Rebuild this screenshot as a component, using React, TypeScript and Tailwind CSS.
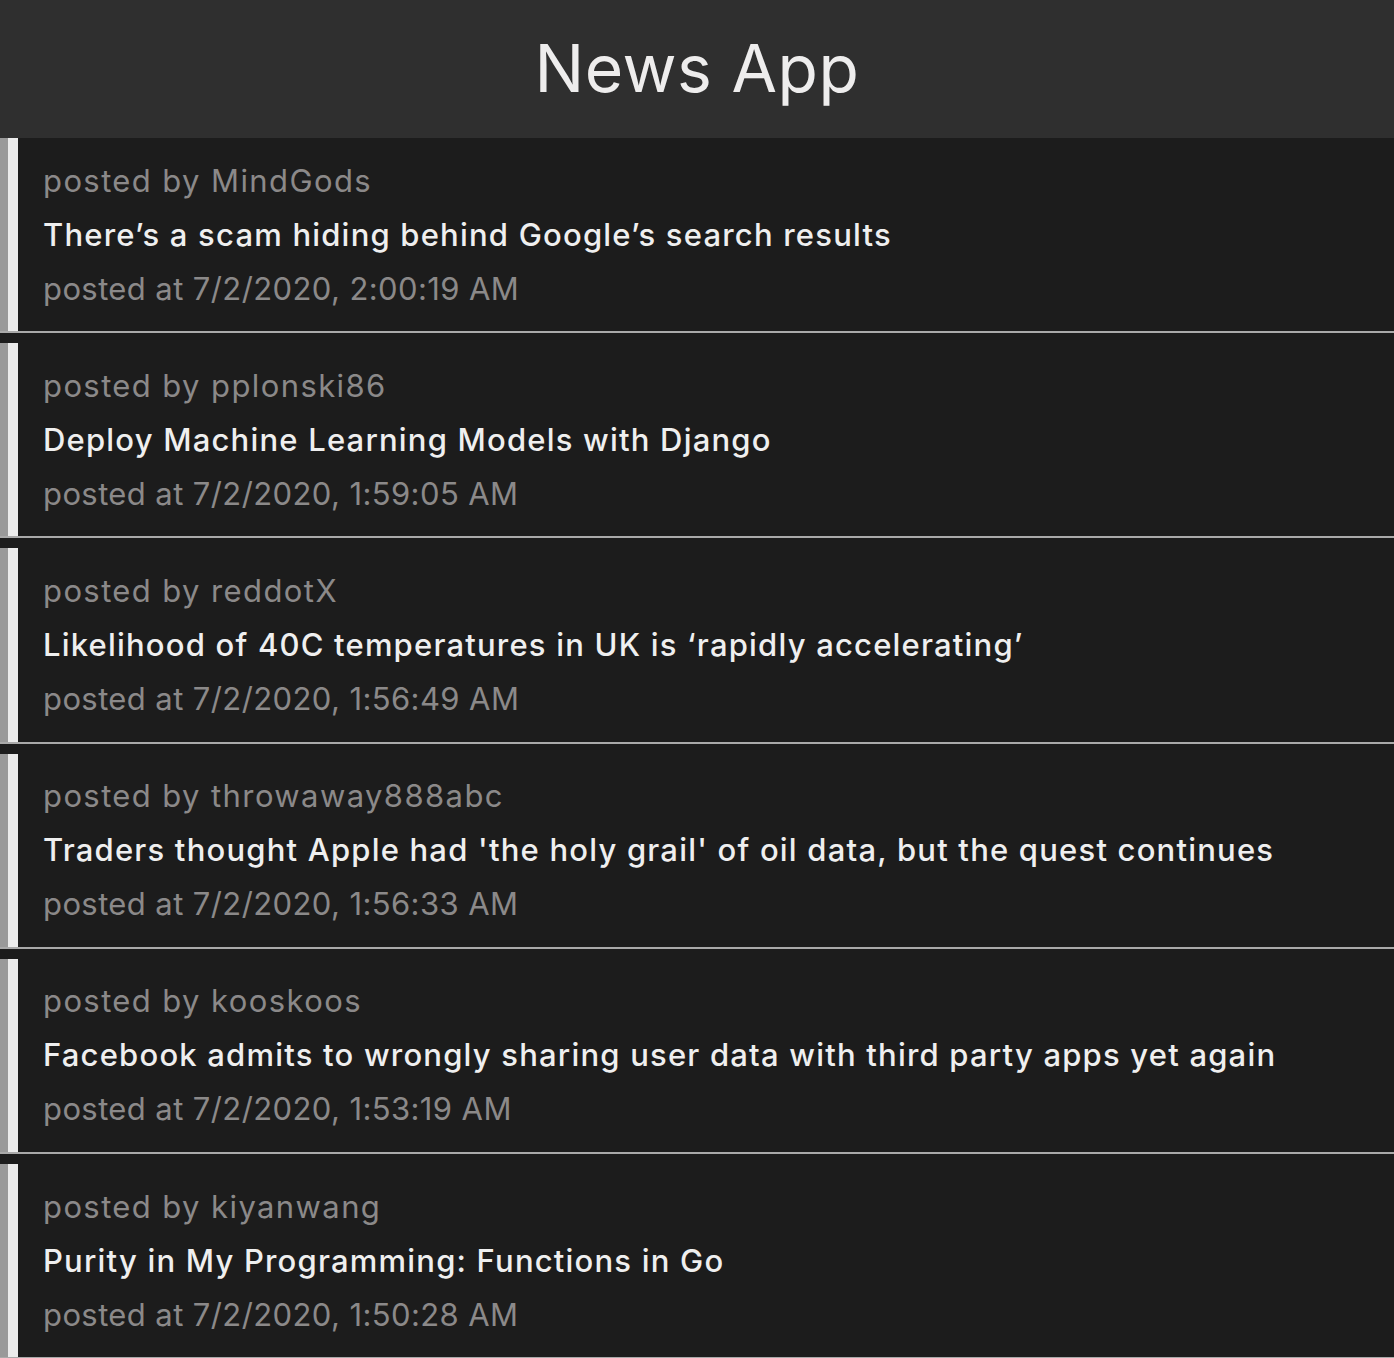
import React from 'react';

const posts = [
  { by: 'MindGods', title: 'There’s a scam hiding behind Google’s search results', at: '7/2/2020, 2:00:19 AM' },
  { by: 'pplonski86', title: 'Deploy Machine Learning Models with Django', at: '7/2/2020, 1:59:05 AM' },
  { by: 'reddotX', title: 'Likelihood of 40C temperatures in UK is ‘rapidly accelerating’', at: '7/2/2020, 1:56:49 AM' },
  { by: 'throwaway888abc', title: "Traders thought Apple had 'the holy grail' of oil data, but the quest continues", at: '7/2/2020, 1:56:33 AM' },
  { by: 'kooskoos', title: 'Facebook admits to wrongly sharing user data with third party apps yet again', at: '7/2/2020, 1:53:19 AM' },
  { by: 'kiyanwang', title: 'Purity in My Programming: Functions in Go', at: '7/2/2020, 1:50:28 AM' },
];

const App = () => {
  return (
    <div className="min-h-screen bg-[#1c1c1c] font-['Inter',sans-serif]">
      <header className="h-[138px] bg-[#2f2f2f] flex items-center justify-center">
        <h1 className="text-[66px] text-[#eeeded] tracking-[0.5px] leading-none pb-[2px]">News App</h1>
      </header>
      <div className="flex flex-col gap-[10px]">
        {posts.map((p) => (
          <div key={p.by} className="flex border-b-2 border-[#a9a9a9]">
            <div className="w-[8px] bg-[#999999]" />
            <div className="w-[10px] bg-[#ebebeb]" />
            <div className="flex-1 pl-[25px] py-[15.6px] text-[31px] leading-[54px]">
              <p className="text-[#8b8989] tracking-[1.4px]">posted by {p.by}</p>
              <p className="text-[#efefef] font-medium tracking-[1.2px]">{p.title}</p>
              <p className="text-[#8b8989] tracking-[0.4px]">posted at {p.at}</p>
            </div>
          </div>
        ))}
      </div>
    </div>
  );
};

export default App;
